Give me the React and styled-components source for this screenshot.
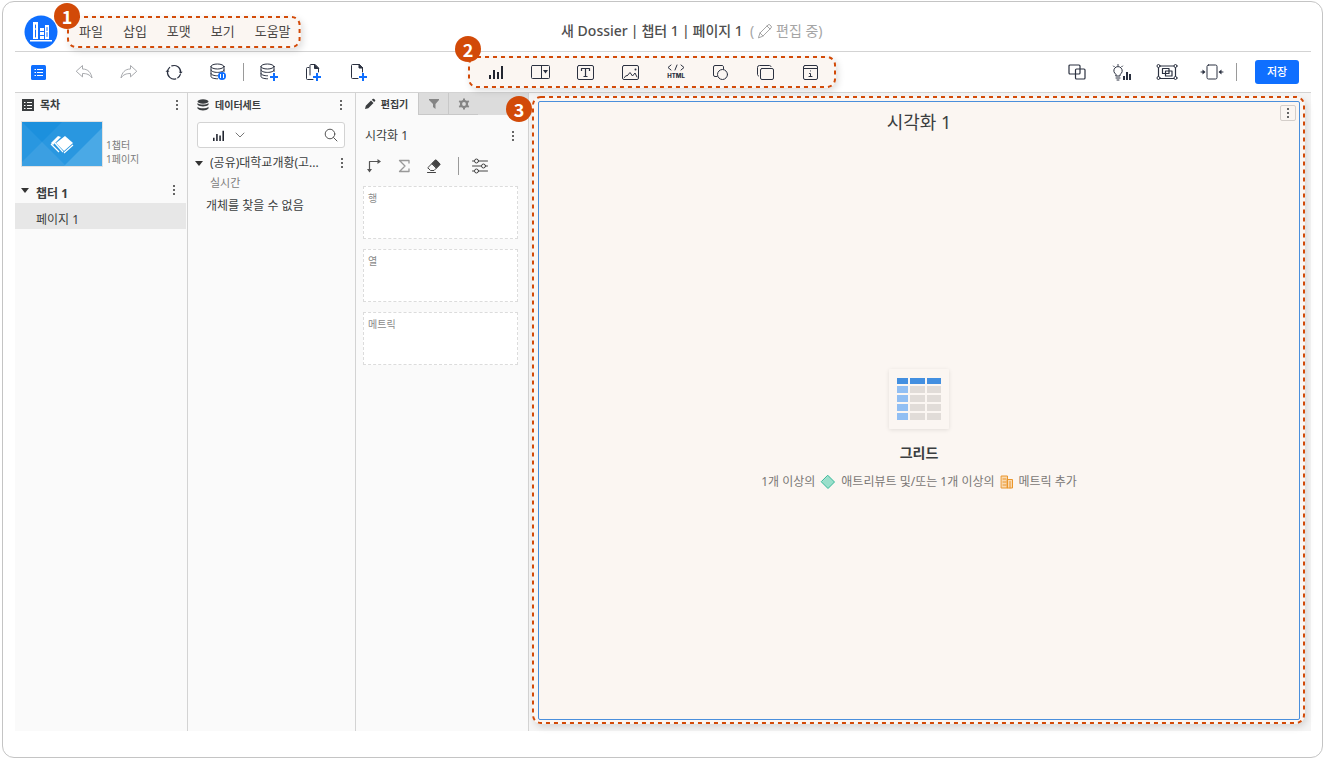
import styled, { createGlobalStyle, css } from "styled-components";

const GlobalStyle = createGlobalStyle`
	* {
		box-sizing: border-box;
	}

	body {
		margin: 0;
		background: #fff;
		color: #3b3e40;
		font-family: "Noto Sans", "Noto Sans CJK KR", sans-serif;
		font-size: 12px;
		line-height: 16px;
	}

	button,
	input {
		font: inherit;
		color: inherit;
		border: none;
		background: none;
		padding: 0;
		margin: 0;
	}

	button {
		cursor: pointer;
	}

	h1, h2, h3, p, ul {
		margin: 0;
		padding: 0;
		font-size: inherit;
		font-weight: inherit;
		list-style: none;
	}

	svg {
		display: block;
		flex: none;
	}
`;

const Page = styled.div`
	min-height: 100vh;
	padding: 1px 2px 2px;
	display: flex;
`;

const Window = styled.div`
	flex: 1;
	min-width: 0;
	display: flex;
	flex-direction: column;
	padding: 0 11px 26px 12px;
	border: 1px solid #c4c4c4;
	border-radius: 12px;
`;

const Header = styled.header`
	display: flex;
	align-items: center;
	height: 50px;
	padding: 10px 0 0 9px;
	border-bottom: 1px solid #d3d3d3;
`;

const Spacer = styled.div`
	flex: ${(props) => props.$grow} 1 0;
`;

const Outline = styled.svg`
	position: absolute;
	inset: 0;
	width: 100%;
	height: 100%;
	overflow: visible;
	pointer-events: none;

	rect {
		width: calc(100% - 2px);
		height: calc(100% - 2px);
		fill: none;
		stroke: #d24a08;
		stroke-width: 2;
		stroke-dasharray: 4 4;
	}
`;

const Marker = styled.span`
	position: absolute;
	z-index: 2;
	left: ${(props) => props.$left}px;
	top: ${(props) => props.$top}px;
	width: 26px;
	height: 26px;
	border-radius: 50%;
	background: #d24a08;
	color: #fff;
	font-family: "Noto Sans CJK KR", sans-serif;
	font-size: 18px;
	font-weight: 700;
	line-height: 26px;
	text-align: center;
`;

const highlight = css`
	position: relative;
	border-radius: 9px;
	background: #fbf6f2;
	box-shadow: 2px 3px 7px rgba(0, 0, 0, 0.13);
`;

const Menu = styled.nav`
	${highlight}
	height: 32px;
	margin-left: 9px;
	padding: 0 10px 2px 12px;

	ul {
		display: flex;
		align-items: center;
		gap: 20px;
		height: 100%;
		font-size: 13px;
		color: #4b4745;
	}
`;

const DocTitle = styled.h1`
	display: flex;
	align-items: center;
	gap: 3px;
	padding-bottom: 2px;
	color: #4e4e4e;
	font-size: 14px;
	font-weight: 500;
	white-space: nowrap;
`;

const EditState = styled.span`
	display: flex;
	align-items: center;
	gap: 3px;
	margin-left: 4px;
	color: #a5a5a5;
	font-weight: 400;
`;

const Toolbar = styled.div`
	display: flex;
	align-items: center;
	height: 41px;
	padding: 0 12px 0 1px;
	border-bottom: 1px solid #d3d3d3;
`;

const ToolGroup = styled.div`
	display: flex;
	align-items: center;
`;

const InsertGroup = styled(ToolGroup)`
	${highlight}
	height: 32px;
	padding: 0 3px 0 5px;
`;

const ToolButton = styled.button`
	display: flex;
	align-items: center;
	justify-content: center;
	width: 45px;
	height: 32px;
`;

const Divider = styled.span`
	width: 1px;
	height: 18px;
	margin: 0 2px;
	background: #9a9a9a;
`;

const SaveButton = styled.button`
	width: 44px;
	height: 24px;
	margin-left: 16px;
	border-radius: 3px;
	background: #0f6fff;
	color: #fff;
	font-size: 11px;
	font-weight: 500;
`;

const Body = styled.main`
	flex: 1;
	display: flex;
	min-height: 0;
`;

const Panel = styled.section`
	flex: none;
	width: ${(props) => props.$width}px;
	border-right: 1px solid #d3d3d3;
	background: #fafafa;
`;

const PanelHeader = styled.header`
	display: flex;
	align-items: center;
	gap: 6px;
	height: 24px;
	padding: 0 ${(props) => props.$right}px 0 ${(props) => props.$left}px;

	h2 {
		flex: 1;
		font-size: ${(props) => props.$size}px;
		font-weight: 700;
	}
`;

const IconButton = styled.button`
	display: flex;
	align-items: center;
	justify-content: center;
	width: 16px;
	height: 16px;
`;

const Cover = styled.div`
	display: flex;
	align-items: flex-end;
	gap: 3px;
	padding: 4px 6px 0;

	p {
		padding-bottom: 1px;
		color: #7c7c7c;
		font-size: 10px;
		line-height: 14px;
	}
`;

const Thumb = styled.svg`
	width: 82px;
	height: 46px;
	border: 1px solid #e2e2e2;
`;

const ChapterRow = styled.div`
	display: flex;
	align-items: center;
	gap: 7px;
	height: 26px;
	margin-top: 10px;
	padding: 0 5px 0 6px;

	h3 {
		flex: 1;
		padding-top: 7px;
		font-weight: 700;
	}
`;

const PageRow = styled.a`
	display: block;
	height: 26px;
	margin-right: 1px;
	padding: 8px 0 0 21px;
	background: #e7e7e7;
	color: inherit;
	line-height: 18px;
	text-decoration: none;
`;

const SearchBox = styled.div`
	display: flex;
	align-items: center;
	height: 26px;
	margin: 5px 10px 0 9px;
	padding: 0 6px 0 14px;
	border: 1px solid #d3d3d3;
	border-radius: 3px;
	background: #fff;

	button {
		display: flex;
		align-items: center;
		gap: 10px;
	}

	input {
		flex: 1;
		min-width: 0;
		padding-left: 6px;
		outline: none;
	}
`;

const Dataset = styled.div`
	padding: 6px 5px 0 7px;

	header {
		display: flex;
		align-items: center;
		gap: 7px;
		height: 18px;
	}

	h3 {
		flex: 1;
		min-width: 0;
		overflow: hidden;
		white-space: nowrap;
		text-overflow: ellipsis;
	}

	p {
		padding-left: 11px;
		line-height: 24px;
	}

	p.mode {
		padding-left: 15px;
		color: #7c7c7c;
		font-size: 11px;
		line-height: 22px;
	}
`;

const Tabs = styled.div`
	display: flex;
	height: 22px;
	background: #dcdcdc;
`;

const Tab = styled.button`
	display: flex;
	align-items: center;
	justify-content: center;
	gap: 5px;
	width: ${(props) => (props.$active ? 62 : 30)}px;
	padding-right: ${(props) => (props.$active ? 2 : 0)}px;
	background: ${(props) => (props.$active ? "#fafafa" : "#dcdcdc")};
	border-left: ${(props) => (props.$active ? "none" : "1px solid #c8c8c8")};
	border-bottom: ${(props) => (props.$active ? "none" : "1px solid #c8c8c8")};
	font-size: 10px;
	font-weight: 700;
`;

const EditorTitle = styled.header`
	display: flex;
	align-items: center;
	justify-content: space-between;
	height: 42px;
	padding: 0 7px 0 9px;
`;

const EditorTools = styled.div`
	display: flex;
	align-items: center;
	gap: 14px;
	height: 18px;
	padding-left: 10px;

	${Divider} {
		margin-right: -1px;
	}
`;

const DropZone = styled.div`
	height: 53px;
	margin: 11px 10px 10px 7px;
	padding: 3px 4px;
	border: 1px dashed #dcdcdc;
	background: #fff;
	color: #8a8a8a;
	font-size: 10px;

	& + & {
		margin-top: 0;
	}
`;

const Workspace = styled.section`
	flex: 1;
	min-width: 0;
	display: flex;
	padding: 3px 6px 7px 3px;
	background: #f5f5f5;
`;

const CanvasHighlight = styled.div`
	${highlight}
	flex: 1;
	display: flex;
	padding: 5px 5px 4px 6px;
`;

const Canvas = styled.article`
	position: relative;
	flex: 1;
	display: flex;
	flex-direction: column;
	align-items: center;
	border: 1px solid #4a8fdc;
	border-radius: 2px;

	h2 {
		height: 40px;
		font-size: 18px;
		line-height: 40px;
	}
`;

const CanvasMenu = styled(IconButton)`
	position: absolute;
	top: 3px;
	right: 3px;
	border: 1px solid #d4ceca;
	border-radius: 2px;
`;

const Empty = styled.div`
	flex: 1;
	display: flex;
	flex-direction: column;
	align-items: center;
	justify-content: center;

	h3 {
		margin-top: 14px;
		font-size: 14px;
		font-weight: 700;
		line-height: 20px;
	}

	p {
		display: flex;
		align-items: center;
		gap: 5px;
		margin-top: 9px;
		color: #7a7775;
		line-height: 20px;
	}
`;

const GridCard = styled.div`
	display: flex;
	align-items: center;
	justify-content: center;
	width: 60px;
	height: 60px;
	border-radius: 1px;
	box-shadow: 0 1px 4px rgba(0, 0, 0, 0.1);
`;

const Svg = ({ w, h, children, ...rest }) => (
	<svg
		width={w}
		height={h}
		viewBox={`0 0 ${w} ${h}`}
		fill='none'
		stroke='#2b3140'
		strokeLinecap='round'
		strokeLinejoin='round'
		aria-hidden='true'
		{...rest}
	>
		{children}
	</svg>
);

const Dots = () => (
	<Svg w={4} h={12} stroke='none'>
		<path fill='#666' d='M1 1h2v2H1zM1 5h2v2H1zM1 9h2v2H1z' />
	</Svg>
);

const Triangle = () => (
	<Svg w={8} h={6} stroke='none'>
		<path fill='#333' d='M0 1h8L4 6z' />
	</Svg>
);

const Logo = () => (
	<Svg w={34} h={34} stroke='none'>
		<circle cx='17' cy='17' r='16.5' fill='#0f6fff' />
		<path fill='#fff' d='M9 7h5v17H9zM16 13h4v11h-4zM21 10h4v14h-4zM6 25h22v1.500H6z' />
		<path stroke='#0f6fff' d='M11.500 10v3M11.500 15v7M16.500 16.500h3M16.500 20.500h3M23 12.500v3M23 17.500v4' />
	</Svg>
);

const ListIcon = () => (
	<Svg w={16} h={16} stroke='none'>
		<rect width='15' height='15' x='0' y='1' rx='1.5' fill='#0f6fff' />
		<path stroke='#fff' d='M3.500 5.500h1.500M6 5.500h6M3.500 8.500h1.500M6 8.500h6M3.500 11.500h1.500M6 11.500h6' strokeLinecap='butt' />
	</Svg>
);

const UndoIcon = ({ flip }) => (
	<Svg w={18} h={16} stroke='#a8aaae'>
		<path
			transform={flip ? "translate(17 1) scale(-1 1)" : "translate(1 1)"}
			d='M.5 6 6.500.5V4c5.500 0 8.500 3.500 9.500 9-2.500-3.500-5-4.500-9.500-4.500v3z'
		/>
	</Svg>
);

const RefreshIcon = () => (
	<Svg w={18} h={18} strokeWidth='1.200'>
		<path d='M2.500 8.500A6.700 6.700 0 0 1 4.700 4.400M6.800 2.900A6.700 6.700 0 0 1 15.700 9.500M15.300 11.500A6.700 6.700 0 0 1 12.800 14.800M10.800 15.800A6.700 6.700 0 0 1 2.500 8.500' />
		<path d='M.500 8.800h4L2.500 6.800zM13.700 8.800h4L15.700 10.800z' fill='#2b3140' stroke='none' />
	</Svg>
);

const Cylinder = () => (
	<g>
		<ellipse cx='7.500' cy='3.500' rx='6.500' ry='2.500' />
		<path d='M1 3.500v10c0 1.200 2.500 2.200 6.500 2.300M14 3.500v5M1 7c0 1.300 3 2.400 6.500 2.400S14 8.300 14 7M1 10.500c0 1.300 3 2.300 6.500 2.300' />
	</g>
);

const Plus = ({ x, y }) => (
	<path stroke='#0f6fff' strokeWidth='2' strokeLinecap='butt' d={`M${x - 4} ${y}h8M${x} ${y - 4}v8`} />
);

const DbPauseIcon = () => (
	<Svg w={18} h={18}>
		<Cylinder />
		<circle cx='12' cy='13' r='4' fill='#0f6fff' stroke='none' />
		<path stroke='#fff' strokeLinecap='butt' d='M10.500 11v4M13.500 11v4' />
	</Svg>
);

const DbPlusIcon = () => (
	<Svg w={18} h={18}>
		<Cylinder />
		<Plus x={14} y={14} />
	</Svg>
);

const CopyPlusIcon = () => (
	<Svg w={18} h={18}>
		<path d='M4 4.500H2.500q-1 0-1 1v10q0 1 1 1H8M5 12V2.500q0-1 1-1h4L13.500 5v4' />
		<path d='M9.500 1.500V5.500h4z' fill='#2b3140' />
		<Plus x={12} y={14} />
	</Svg>
);

const PagePlusIcon = () => (
	<Svg w={18} h={18}>
		<path d='M8 15.500H2.500q-1 0-1-1v-12q0-1 1-1H9L12.500 5v4' />
		<path d='M9 1.500V5h3.500z' fill='#2b3140' />
		<Plus x={13} y={14} />
	</Svg>
);

const BarsIcon = ({ w = 16, h = 14 }) => (
	<Svg w={w} h={h} viewBox='0 0 16 14' stroke='none'>
		<path fill='#222630' d='M1 10h2v4H1zM5 5h2v9H5zM9 7h2v7H9zM13 1h2v13h-2z' />
	</Svg>
);

const SelectorIcon = () => (
	<Svg w={19} h={14}>
		<rect x='0.500' y='0.500' width='18' height='13' rx='1' />
		<path d='M10.500.500v13' />
		<path d='M12 5h5l-2.500 3.500z' fill='#2b3140' stroke='none' />
	</Svg>
);

const TextIcon = () => (
	<Svg w={17} h={15}>
		<rect x='0.500' y='0.500' width='16' height='14' rx='1.500' />
		<path d='M4.500 6V3.500h8V6M8.500 3.500v8M6.500 11.500h4' strokeWidth='1.200' strokeLinecap='butt' />
	</Svg>
);

const ImageIcon = () => (
	<Svg w={17} h={15}>
		<rect x='0.500' y='0.500' width='16' height='14' rx='1.500' />
		<path d='m2.500 12.500 1.500-2 1 .5 3-3.500 2.500 3.500 2.500-3 2 4' />
		<circle cx='13.500' cy='4.500' r='1' fill='#2b3140' stroke='none' />
	</Svg>
);

const HtmlIcon = () => (
	<Svg w={20} h={16}>
		<path d='M5 1 2 3.500 5 6M15 1l3 2.500L15 6M11 1 9 6' />
		<text
			x='10'
			y='14'
			textAnchor='middle'
			fill='#2b3140'
			stroke='none'
			fontFamily='Inter, sans-serif'
			fontSize='6'
			fontWeight='800'
		>
			HTML
		</text>
	</Svg>
);

const ShapesIcon = () => (
	<Svg w={15} h={15}>
		<path d='M4 11.500H2q-1.500 0-1.500-1.500V2Q.500.500 2 .5h7q1 0 1.500 1V4' />
		<circle cx='9.500' cy='9.500' r='5' />
	</Svg>
);

const PanelsIcon = () => (
	<Svg w={17} h={15}>
		<path d='M1.500 11q-1-.5-1-1.500v-7q0-2 2-2h10q1.200 0 1.500 1' />
		<rect x='3.500' y='3.500' width='13' height='11' rx='1.500' />
	</Svg>
);

const InfoIcon = () => (
	<Svg w={15} h={15}>
		<rect x='0.500' y='0.500' width='14' height='14' rx='1.500' />
		<path d='M.500 3.500h14M6.500 8.500h1v3M6 11.500h3M7.500 5.900v.1' />
	</Svg>
);

const OverlapIcon = () => (
	<Svg w={18} h={16} strokeWidth='1.200'>
		<rect x='1' y='1' width='11' height='9' rx='1' />
		<rect x='7.500' y='5' width='9.500' height='10' rx='1' />
	</Svg>
);

const BulbIcon = () => (
	<Svg w={20} h={17}>
		<path d='M4 10.500a4.200 4.200 0 1 1 4 0v1.500H4zM4 14h4M5 16h2M6 .5v1M1.500 2l.8.800M10.500 2l-.8.800' />
		<path stroke='none' fill='#2b3140' d='M11 12h2v4h-2zM14 8h2v8h-2zM17 10h2v6h-2z' />
	</Svg>
);

const GroupIcon = () => (
	<Svg w={22} h={16}>
		<path strokeWidth='1.200' d='M2.500 2h17v12.500h-17z' />
		<g fill='#fff'>
			<circle cx='2.500' cy='2' r='1.500' />
			<circle cx='19.500' cy='2' r='1.500' />
			<circle cx='2.500' cy='14' r='1.500' />
			<circle cx='19.500' cy='14' r='1.500' />
		</g>
		<path strokeWidth='1.200' d='M6.500 4.500h6.500v5H6.500zM9.500 7h6.500v5H9.500z' />
	</Svg>
);

const FitIcon = () => (
	<Svg w={24} h={16}>
		<rect x='7' y='1' width='10' height='14' rx='1.500' />
		<path d='M1 8h3M23 8h-3' />
		<path d='M2.500 5.500v5L5.500 8zM21.500 5.500v5L18.500 8z' fill='#2b3140' stroke='none' />
	</Svg>
);

const PencilIcon = ({ solid }) =>
	solid ? (
		<Svg w={12} h={12} stroke='none'>
			<path fill='#3b3e40' d='m1 11 .8-3.300L7 2.500 9.500 5 4.300 10.200zM7.800 1.800 9 .8q.6-.4 1.200.2l.9.900q.5.600 0 1.200l-1 1z' />
		</Svg>
	) : (
		<Svg w={16} h={16} stroke='#a5a5a5'>
			<path d='M1.500 14.500 3 10l8-8q1-1 2 0l1 1q1 1 0 2l-8 8zM10 3l3 3M3 10l3 3' />
		</Svg>
	);

const CoverArt = () => (
	<Thumb viewBox='0 0 80 44' preserveAspectRatio='none' aria-hidden='true'>
		<path fill='#2997e0' d='M0 0h80v44H0z' />
		<path fill='#1c90dd' d='M0 0h40L20 20z' />
		<path fill='#3b9fe2' d='M20 20 44 44H0V40z' />
		<path fill='#4aa9e6' d='M80 6v38H42z' />
		<path fill='#fff' d='m43 14 8 7-9 8-8-8z' />
		<path fill='#fff' d='m36 14-7 7 2 2 8-8z' />
		<path fill='none' stroke='#fff' strokeWidth='1.200' d='m29 22 8 8M33 21l8 9M51 23l-9 8' />
	</Thumb>
);

const menuItems = ["파일", "삽입", "포맷", "보기", "도움말"];

const editTools = [
	["목차", ListIcon],
	["실행 취소", UndoIcon],
	["다시 실행", () => <UndoIcon flip />],
	["새로 고침", RefreshIcon],
	["데이터 일시 중지", DbPauseIcon],
];

const addTools = [
	["데이터 추가", DbPlusIcon],
	["챕터 추가", CopyPlusIcon],
	["페이지 추가", PagePlusIcon],
];

const insertTools = [
	["시각화", BarsIcon],
	["필터", SelectorIcon],
	["텍스트", TextIcon],
	["이미지", ImageIcon],
	["HTML", HtmlIcon],
	["도형", ShapesIcon],
	["패널 스택", PanelsIcon],
	["정보 창", InfoIcon],
];

const viewTools = [
	["자유 형식", OverlapIcon],
	["인사이트", BulbIcon],
	["그룹", GroupIcon],
	["맞춤", FitIcon],
];

const dropZones = ["행", "열", "메트릭"];

const renderTools = (tools) =>
	tools.map(([label, Icon]) => (
		<ToolButton key={label} aria-label={label}>
			<Icon />
		</ToolButton>
	));

const DashedOutline = () => (
	<Outline aria-hidden='true'>
		<rect x='1' y='1' rx='8' />
	</Outline>
);

const MoreButton = () => (
	<IconButton aria-label='더 보기'>
		<Dots />
	</IconButton>
);

function ContentsPanel() {
	return (
		<Panel $width={173}>
			<PanelHeader $left={7} $right={2} $size={11}>
				<Svg w={12} h={12} stroke='none'>
					<path fill='#3b3e40' d='M0 0h12v12H0z' />
					<path stroke='#fff' strokeLinecap='butt' d='M2 3.500h1.500M5 3.500h5M2 6.500h1.500M5 6.500h5M2 9.500h1.500M5 9.500h5' />
				</Svg>
				<h2>목차</h2>
				<MoreButton />
			</PanelHeader>
			<Cover>
				<CoverArt />
				<p>
					1챕터
					<br />
					1페이지
				</p>
			</Cover>
			<ChapterRow>
				<Triangle />
				<h3>챕터 1</h3>
				<MoreButton />
			</ChapterRow>
			<PageRow href='#page-1'>페이지 1</PageRow>
		</Panel>
	);
}

function DatasetPanel() {
	return (
		<Panel $width={168}>
			<PanelHeader $left={9} $right={6} $size={10}>
				<Svg w={12} h={12} stroke='none'>
					<ellipse cx='6' cy='2.500' rx='5.500' ry='2.200' fill='#3b3e40' />
					<path fill='#3b3e40' d='M.5 4c2 2 9 2 11 0v1.800c-2 2.300-9 2.300-11 0zM.5 7.800c2 2 9 2 11 0v1.700c-2 2.500-9 2.500-11 0z' />
				</Svg>
				<h2>데이터세트</h2>
				<MoreButton />
			</PanelHeader>
			<SearchBox>
				<button aria-label='개체 유형'>
					<BarsIcon w={13} h={11} />
					<Svg w={10} h={6} stroke='#777'>
						<path d='m1 1 4 4 4-4' />
					</Svg>
				</button>
				<input aria-label='검색' />
				<Svg w={14} h={14} stroke='#555'>
					<circle cx='6' cy='6' r='4.800' />
					<path d='m9.500 9.500 3.500 3.500' />
				</Svg>
			</SearchBox>
			<Dataset>
				<header>
					<Triangle />
					<h3>(공유)대학교개황(고...</h3>
					<MoreButton />
				</header>
				<p className='mode'>실시간</p>
				<p>개체를 찾을 수 없음</p>
			</Dataset>
		</Panel>
	);
}

function EditorPanel() {
	return (
		<Panel $width={173}>
			<Tabs>
				<Tab $active>
					<PencilIcon solid />
					편집기
				</Tab>
				<Tab aria-label='필터'>
					<Svg w={10} h={10} stroke='none'>
						<path fill='#858585' d='M0 0h10v1L6.500 5v5L4 8V5L0 1z' />
					</Svg>
				</Tab>
				<Tab aria-label='서식'>
					<Svg w={12} h={12} stroke='#858585'>
						<circle cx='6' cy='6' r='3' strokeWidth='2.200' />
						<path strokeWidth='2' strokeLinecap='butt' d='M6 .5v2M6 9.500v2M1.200 3.200l1.800 1M9 7.800l1.800 1M1.200 8.800l1.800-1M9 4.200l1.800-1' />
					</Svg>
				</Tab>
			</Tabs>
			<EditorTitle>
				<h2>시각화 1</h2>
				<MoreButton />
			</EditorTitle>
			<EditorTools>
				<IconButton aria-label='행과 열 바꾸기'>
					<Svg w={16} h={16} stroke='#555'>
						<path strokeWidth='1.200' d='M3.500 12V3.500H12' />
						<path fill='#555' stroke='none' d='M1 11h5l-2.500 3.500zM11.500 1v5L15 3.500z' />
					</Svg>
				</IconButton>
				<IconButton aria-label='합계 표시'>
					<Svg w={14} h={14} stroke='#999' strokeWidth='1.300'>
						<path d='M12 4V1.500H2.500L8 7l-5.500 5.500H12V10' />
					</Svg>
				</IconButton>
				<IconButton aria-label='지우기'>
					<Svg w={16} h={16} stroke='#444'>
						<path d='m2 9.500 7-7q.8-.8 1.600 0l2.900 2.900q.8.800 0 1.600L8 12.500H5zM1.500 14.500h8' />
						<path fill='#444' d='m6 5.500 3-3q.8-.8 1.600 0l2.900 2.900q.8.800 0 1.600l-3 3z' />
					</Svg>
				</IconButton>
				<Divider />
				<IconButton aria-label='옵션'>
					<Svg w={16} h={16} stroke='#444'>
						<path d='M.5 3h15M.5 8h15M.5 13h15' />
						<g fill='#fafafa'>
							<circle cx='4.500' cy='3' r='2' />
							<circle cx='11.500' cy='8' r='2' />
							<circle cx='4.500' cy='13' r='2' />
						</g>
					</Svg>
				</IconButton>
			</EditorTools>
			{dropZones.map((zone) => (
				<DropZone key={zone}>{zone}</DropZone>
			))}
		</Panel>
	);
}

const GridArt = () => {
	const columns = [
		[0, 11],
		[13, 15],
		[30, 14],
	];
	return (
		<Svg w={44} h={42} stroke='none'>
			{[0, 1, 2, 3, 4].map((row) =>
				columns.map(([x, width], col) => (
					<rect
						key={`${row}-${col}`}
						x={x}
						y={row === 0 ? 0 : row * 9 - 1}
						width={width}
						height={row === 0 ? 6 : 7}
						fill={row === 0 ? "#438fe0" : col === 0 ? "#92bff3" : "#e1dcd8"}
					/>
				))
			)}
		</Svg>
	);
};

function Visualization() {
	return (
		<Workspace>
			<CanvasHighlight>
				<DashedOutline />
				<Marker $left={-26} $top={0}>
					3
				</Marker>
				<Canvas>
					<h2>시각화 1</h2>
					<CanvasMenu aria-label='시각화 메뉴'>
						<Dots />
					</CanvasMenu>
					<Empty>
						<GridCard>
							<GridArt />
						</GridCard>
						<h3>그리드</h3>
						<p>
							1개 이상의
							<Svg w={16} h={14} stroke='#35b898'>
								<path fill='#9adfcb' d='m8 .5 6.500 6.500L8 13.500 1.500 7z' />
							</Svg>
							애트리뷰트 및/또는 1개 이상의
							<Svg w={14} h={14} stroke='#ea962c' strokeLinejoin='miter'>
								<path fill='#f9d9b0' d='M1.500 1h6v12h-6zM7.500 4.500h5V13h-5z' />
								<path d='M3 4h3M3 7h3M3 10h3M10 6.500V13' />
							</Svg>
							메트릭 추가
						</p>
					</Empty>
				</Canvas>
			</CanvasHighlight>
		</Workspace>
	);
}

export default function App() {
	return (
		<Page>
			<GlobalStyle />
			<Window>
				<Header>
					<Logo />
					<Menu>
						<DashedOutline />
						<Marker $left={-13} $top={-13}>
							1
						</Marker>
						<ul>
							{menuItems.map((item) => (
								<li key={item}>
									<button>{item}</button>
								</li>
							))}
						</ul>
					</Menu>
					<Spacer $grow={8} />
					<DocTitle>
						<span>새 Dossier</span>
						<span>|</span>
						<span>챕터 1</span>
						<span>|</span>
						<span>페이지 1</span>
						<EditState>
							(<PencilIcon />
							편집 중)
						</EditState>
					</DocTitle>
					<Spacer $grow={15} />
				</Header>
				<Toolbar>
					<ToolGroup>
						{renderTools(editTools)}
						<Divider />
						{renderTools(addTools)}
					</ToolGroup>
					<Spacer $grow={2} />
					<InsertGroup>
						<DashedOutline />
						<Marker $left={-13} $top={-20}>
							2
						</Marker>
						{renderTools(insertTools)}
					</InsertGroup>
					<Spacer $grow={5} />
					<ToolGroup>
						{renderTools(viewTools)}
						<Divider />
						<SaveButton>저장</SaveButton>
					</ToolGroup>
				</Toolbar>
				<Body>
					<ContentsPanel />
					<DatasetPanel />
					<EditorPanel />
					<Visualization />
				</Body>
			</Window>
		</Page>
	);
}
